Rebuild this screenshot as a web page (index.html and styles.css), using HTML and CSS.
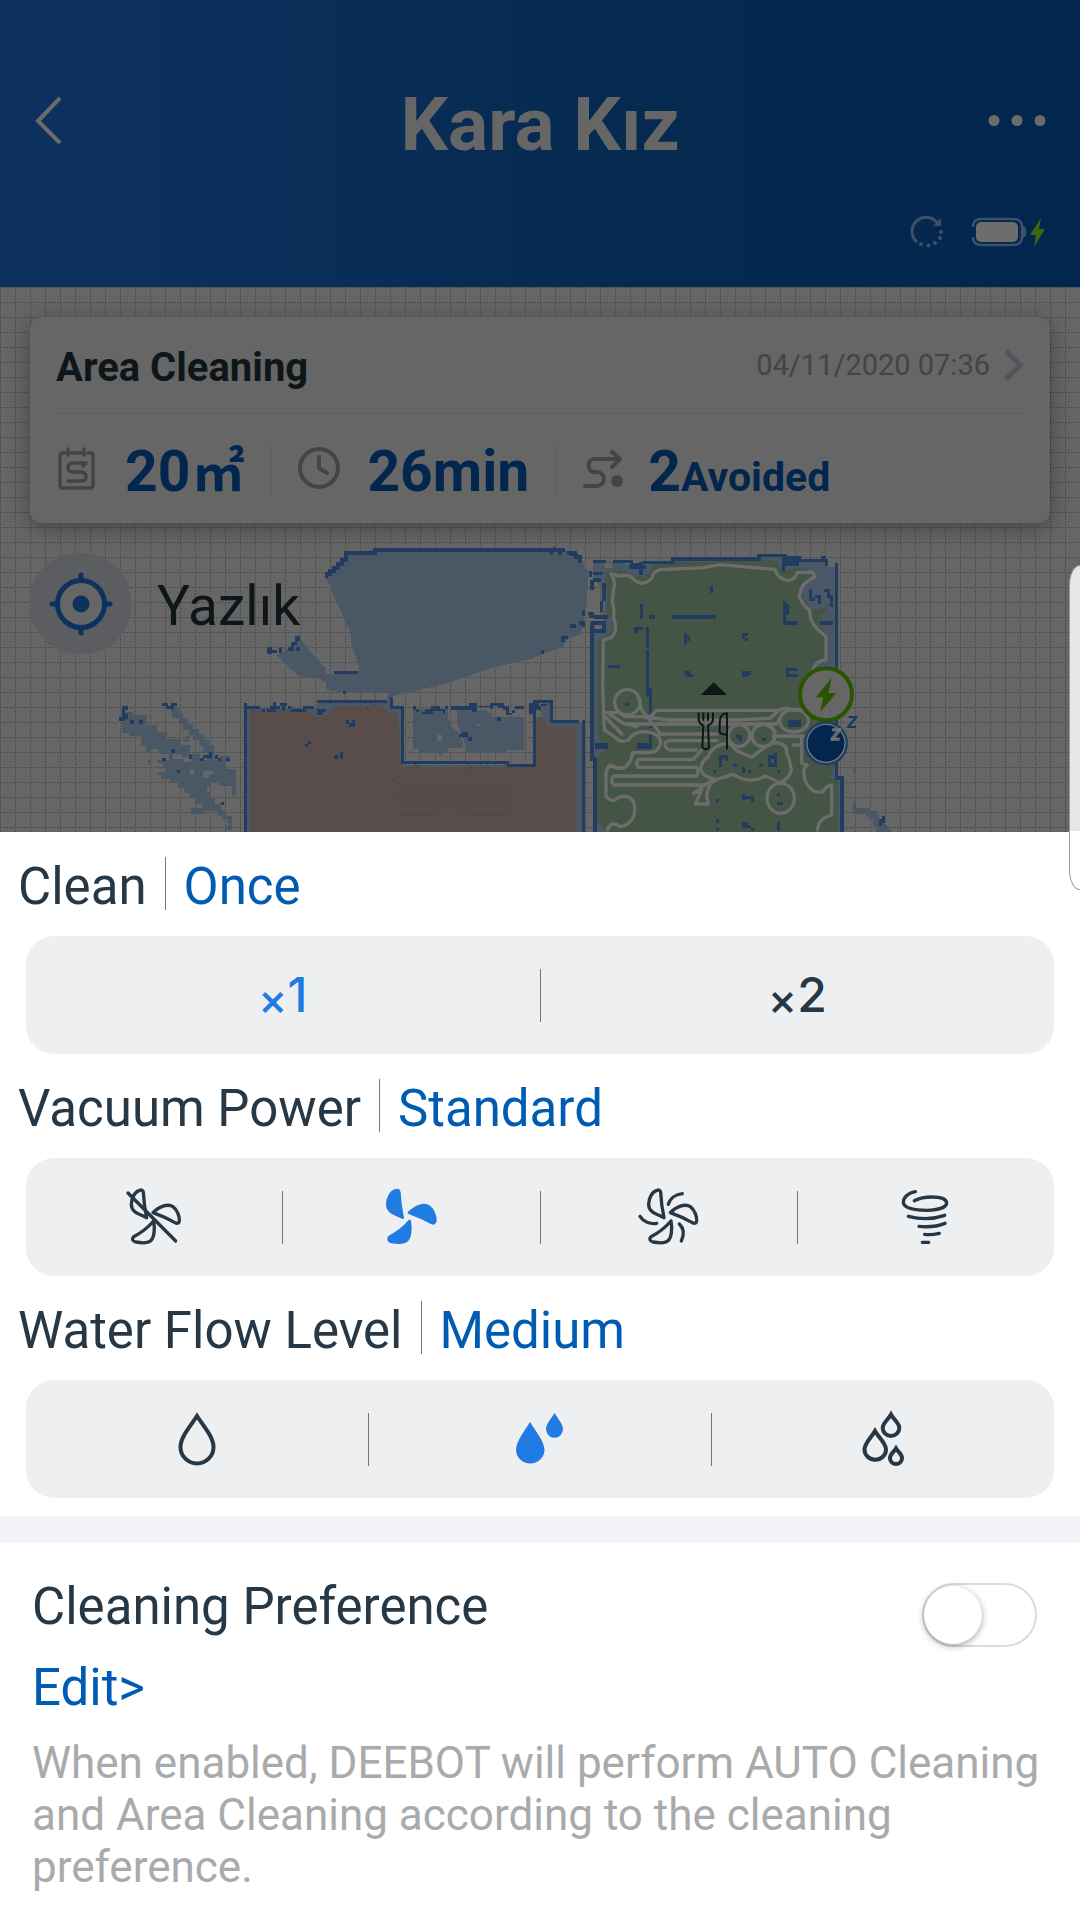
FILE: index.html
```html
<!DOCTYPE html>
<html lang="en">
<head>
<meta charset="utf-8">
<meta name="viewport" content="width=device-width, initial-scale=1">
<title>Kara Kız</title>
<link rel="stylesheet" href="styles.css">
</head>
<body>
<header class="topbar">
  <nav class="nav">
    <button class="icon-button" type="button" aria-label="Back">
      <svg width="28" height="50" viewBox="0 0 28 50" fill="none" stroke="currentColor" stroke-width="4"><path d="M26 3 4 26l22 22"/></svg>
    </button>
    <h1 class="title">Kara Kız</h1>
    <button class="icon-button" type="button" aria-label="More">
      <svg width="58" height="14" viewBox="0 0 58 14" fill="currentColor"><circle cx="6" cy="7.500" r="5.500"/><circle cx="29" cy="7.500" r="5.500"/><circle cx="52" cy="7.500" r="5.500"/></svg>
    </button>
  </nav>
  <div class="status">
    <svg width="34" height="34" viewBox="0 0 34 34" fill="none" stroke="#3c5067" stroke-width="3">
      <path d="M7 27A14 14 0 1 1 28 9"/><path d="M31 3v8h-8z" fill="#3c5067" stroke="none"/>
      <g fill="#3c5067" stroke="none"><circle cx="31" cy="17" r="2"/><circle cx="30" cy="23" r="2"/><circle cx="25" cy="28" r="2"/><circle cx="18.500" cy="30.500" r="2"/><circle cx="11" cy="29" r="2"/></g>
    </svg>
    <svg width="74" height="34" viewBox="0 0 74 34">
      <path d="M1 12Q1 4 9 4h32q9 0 9 8v10q0 8-9 8H9q-8 0-8-8" fill="none" stroke="#3c5067" stroke-width="2.500"/>
      <rect x="4" y="7" width="42" height="20" rx="5" fill="#6d6d6d"/>
      <path d="M51 11q3 1 3 6t-3 6z" fill="#3c5067" stroke="#3c5067"/>
      <path d="M69 3 58 20h6l-2 12 11-18h-6z" fill="#3d680f"/>
    </svg>
  </div>
</header>

<main>
<section class="floor">
  <svg class="floor-map" viewBox="0 287 1080 545" preserveAspectRatio="xMidYMin slice" aria-hidden="true">
    <defs>
      <pattern id="grid" x="0" y="287" width="15" height="15" patternUnits="userSpaceOnUse">
        <path d="M0 .5H15M.5 0V15" stroke="#4e4e4e" stroke-dasharray="2 1" fill="none"/>
      </pattern>
      <pattern id="hatch" x="297" y="770" width="27" height="26" patternUnits="userSpaceOnUse">
        <path d="M3 3 9 3 18 11" stroke="#4b4143" stroke-width="3" fill="none"/>
      </pattern>
    </defs>
    <rect y="287" width="1080" height="545" fill="#666"/>
    <rect y="287" width="1080" height="545" fill="url(#grid)"/>

    <!-- stray readings on the left -->
    <g transform="translate(0 530) scale(.33333)" shape-rendering="crispEdges">
      <path fill="#4a5866" d="M365 545h35v9h40v30h30v22h30v20h40v20h30v25h30v18h60v-10h30v18h-16v20h34v80h-12v-28h-40v-9h-26v9h-10v18h10v16h14v20h20v18h15v18h16v40h-20v-10h10v-22h-20v-9h-12v-16h-40v9h-40v-16h32v-14h-18v-16h-16v-16h-20v-16h-18v-16h-24v-9h-26v-12h-10v-9h26v-12h-10v-16h-18v-10h36v-16h-30v-16h-24v9h-14v-18h-16v-30h-36v-9h-20z"/>
      <path fill="#4a5866" d="M510 535h28v14h10v16h16v16h16v16h16v16h16v16h16v16h14v50h-20v-30h-12v-18h-14v-16h-16v-16h-14v-16h-16v-16h-14v-18h-16zM550 635h18v-18h-10v9h-8zM445 690h9v10h-9z"/>
      <path fill="#666" d="M570 720h12v16h-12zM610 722h30v10h-12v12h-18zM520 672h26v10h26v14h-20v-8h-32z"/>
      <path fill="#213c5e" d="M366 528h18v12h-9v12h9v14h-10v7h-17v-12h9zM390 570h12v11h-12zM417 570h12v11h-12zM487 519h18v8h8v-8h18v10h-8v9h-26v-9h-10zM512 657h13v11h-13zM486 683h12v10h-12zM530 719h10v10h-10zM567 675h10v11h-10zM600 683h10v-7h16v-10h10v18h-24v8h-12zM645 675h9v8h9v9h-9v-6h-9zM678 684h12v8h-12zM663 815h9v10h-9z"/>
    </g>

    <g transform="translate(300 530) scale(.33333)" shape-rendering="crispEdges">
      <!-- upper room -->
      <path fill="#4a5866" d="M78 145 90 165 102 200 122 240 136 280 150 300 155 350 165 375 178 410 174 430 78 432 78 415 40 375 0 325-15 340-40 360-70 375-50 395-30 415 0 440 48 440 78 458 78 478 130 488 262 488 270 500 340 485 440 460 500 440 570 415 700 385 730 370 790 350 800 330 845 310 858 230 865 210 865 125 845 95 830 70 795 60H225L138 68z"/>
      <path fill="none" stroke="#213c5e" stroke-width="10" d="M80 145v-13h10v-9h12v-9h12v-12h12v-12h12V69H225V60H795M800 69h27v12h13v18M750 70h8M764 50v10M775 70h10M102 427h72M129 488h10"/>
      <path fill="#213c5e" d="M-99 351h14v9h15v8h6v-17h9v18h-28v4h-16zM-35 350h9v-14h10v-18h15v16h-8v10h-8v18h-18zM-12 350h12v12h-12zM810 282h18v11h-18zM836 274h18v18h-8v-8h-10zM845 240h10v18h-10zM863 246h18v18h-10v-9h-8zM783 319h20v8h-8v9h-12zM723 361h9v11h-9z"/>
      <!-- red room -->
      <path fill="#4a5866" d="M-158 535H45L55 518H262V495h13v40h30V705H705V560h20v-40h25v60H850V905H-158z"/>
      <path fill="#594d4c" d="M-150 540H20L35 555 60 563 85 550 110 528H245L272 552 290 546 300 620V690L308 710H705L708 575 722 565 750 590H828V905H-150z"/>
      <path fill="url(#hatch)" d="M297 770H642V862H297zM272 796h27v26h-27z"/>
      <path fill="none" stroke="#473e40" stroke-width="3" d="M180 540l12 12M198 530l12 12M214 520l12 8M343 702l14 12M485 712l18 16M505 703l14 12M560 703l12 12M612 703l10 8M275 745l12 10"/>
      <path fill="none" stroke="#213c5e" stroke-width="9" d="M-163 905V519M-160 532h40M-115 541h10M-98 541h12v-9h26M-78 516v30M-60 524h20M-50 524v20M-35 532h8M-28 541H15V532H42M50 514H262M274 500V532H308V698H627V706H703V514H755V576H838M851 570V905"/>
      <path fill="#666" d="M314 540H696V702H628V693H314z"/>
      <path fill="url(#grid)" transform="scale(3) translate(-300 -530)" d="M405 710H532V764H509V761H405z"/>
      <path fill="#4a5866" d="M340 536H445V565L455 590 475 605 480 620 490 640 487 655H445V668H425V677H417V668H357V658H340zM470 541H560V550H575V560H672V660H620V668H503L495 640 480 605 470 580z"/>
      <path fill="#666" d="M411 615h15v18h-15zM530 582h10v6h-10z"/>
      <path fill="#213c5e" d="M338 528h9v9h9v9h-9v-6h-9zM374 536h18v-8h28v9h16v-8h9v8h-9v15h-8v-8h-28v9h-34v-8h8zM454 528h52v-9h24v18h-18v-6h18v14h-14v-6h-62zM535 528h34v-9h44v14h-18v-5h-16v8h-10v-4h-34zM600 528h28v22h16v-9h-8v14h-18v-14h-10v-6h-8zM645 528h27v8h-27zM687 520h12v-9h18v18h24v-8h-18v18h-14v12h-22zM592 562h12v10h-12zM478 612h9v-6h18v16h10v10h-10v-10h-27z"/>
      <path fill="#213c5e" d="M138 570h9v9h9v-9h9v20h-18v-9h-9zM15 642h9v-9h9v9h-9v9h-9zM102 675h11v11h-11zM120 667h9v19h-9zM51 538h26v8h-9v8h-17z"/>
    </g>

    <!-- kitchen -->
    <g transform="translate(570 530) scale(.33333)">
      <g shape-rendering="crispEdges">
        <path fill="#4a5866" d="M66 285H100V250L110 180 70 150V95H130L215 108 310 92 568 80 690 78V92H770V110H800V560L805 745 820 750V905H70V690H62z"/>
        <path fill="#666" d="M50 180h40v60H50zM105 100h20v14h-20zM75 286h20v16H75z"/>
        <path fill="#445545" d="M82 335 100 320 125 305 128 270 112 258 108 125 170 122 180 135 215 140 240 125 255 105 310 97 568 92 620 90 640 125 680 110 735 128 690 170 710 220 730 240 760 235 785 215 760 250 745 285 768 310 775 385 725 400 790 440 795 560 800 700 780 740 805 755V905H108L82 870V690L90 670 112 655 90 630 82 600z"/>
        <path fill="none" stroke="#213c5e" stroke-width="11" d="M66 275V688H75V905M62 280H102V303H70M70 95h38M70 131h28M62 122v18M66 150v30M94 150h-24M102 160v52M95 212v34M64 246v14M72 262h42M130 95h55v10h30M214 95v40M178 112h50M215 98H310V88H568V77H645V92H770V108M641 85v40M641 103h42V95M640 83h52M752 84h10v12M800 98V745H817V905"/>
        <path fill="#213c5e" d="M0 64h16v9h12v9h9v14h-10v-10h-9v-8H0zM0 282h18v11H0zM28 274h18v18h-10v-9h-8zM36 240h9v17h-9zM55 246h18v18H63v-9h-8z"/>
        <path fill="#213c5e" d="M420 168h9v20h-9zM210 222h9v45h-9zM237 255h18v11h-18zM306 255h132v12H306zM192 290h26v10h-14v8h-12zM228 292h9v62h-9zM228 360h9v115h8v120h-9v-95h-8zM236 612h9v46h-44v-18h35zM114 404h36v10h-36zM342 310h10v8h8v16h-8v11h-10zM516 310h18v9h-9v6h9v9h-9v-7h-9zM342 424h18v8h9v9h-18v-7h-9zM516 424h26v10h-9v7h-17zM684 414v9h-27v9h27v9h-36v-27zM639 214h9v8h9v32h-9v20h36v10h-45zM750 273h39v11h-39zM717 178h9v26h9v9h-18zM735 204v-8h18v26h-9v-18zM762 178h18v18h9v34h-9v-26h-10v-17h-8zM76 640h38v18H76zM165 518h12v10h-12zM498 614h18v18h-9v-9h-9zM576 624h12v9h-12zM654 570h39v20h-39zM447 676h26v16h-8v-8h-8v26h-10zM490 702h10v9h-10zM516 710h9v18h-9zM534 720h9v8h-9zM430 720h8v8h-8zM568 702h11v9h-11zM594 676h18v-8h9v42h-27zM621 720h9v9h-9zM438 806h9v9h-9zM516 792h10v5h26v18h-9v-9h-18v4h-9zM621 790h9v8h-9zM621 816h18v9h-18zM438 867h9v12h-9zM438 893h9v9h-9zM516 877h18v8h8v9h9v9h-9v-9h-26zM621 877h9v26h-9z"/>
        <path fill="#445545" d="M603 686h9v14h-9z"/>
        <path fill="#4a5866" d="M849 712h9v16h-9zM849 817h9v18h42v9h18v9h9v27h18v9h9v9h9v7h-44v-18h-9v-18h-14v-9h-9v-9h-38z"/>
        <path fill="#213c5e" d="M936 859h9v20h-9v9h-9v-20h9z"/>
      </g>
      <!-- driven route -->
      <g fill="none" stroke="#6d6c6d" stroke-width="10" stroke-linejoin="round" stroke-linecap="round">
        <path d="M735 140Q730 122 715 127L682 127Q675 150 655 152 620 145 615 118L575 115 450 104 400 113 270 119Q250 125 245 145 220 170 195 152 180 130 150 138L123 132Q140 160 130 180L127 215Q135 240 130 260 145 300 125 322L100 330 98 470 103 600 140 625Q150 640 175 630 190 605 225 605 270 610 272 635 268 670 230 668L188 668Q185 700 160 715 135 715 120 705 105 720 108 745V800Q125 815 135 810 150 795 175 800 200 815 193 850 185 885 150 890 125 870 112 900"/>
        <path d="M735 140Q690 160 688 200 700 230 720 240 715 270 745 300L768 320V390Q740 390 728 420M695 625V700L712 705Q695 715 705 750 725 795 760 785 770 765 785 765V855Q745 865 742 900"/>
        <circle cx="172" cy="517" r="38"/>
        <path d="M105 548H150L165 560H240L260 541H625Q650 530 665 540H700M205 500 215 540 272 612H440M165 582H620L632 562M215 560 300 570H500L600 565 625 542M108 562 155 612M118 552 160 580 200 590M440 632H300Q285 632 285 645 290 660 300 660H380M395 660 370 688H205Q195 700 205 712H380Q388 725 380 738H130Q120 752 130 765H400L440 750"/>
        <ellipse cx="672" cy="572" rx="43" ry="34"/><ellipse cx="507" cy="617" rx="32" ry="33"/><ellipse cx="580" cy="617" rx="34" ry="33"/>
        <path d="M605 590 615 605M610 618H700M670 645H690M480 640Q430 640 415 680 395 690 392 720 405 745 440 748L490 733Q540 765 585 738 610 745 625 760 660 745 664 720 660 690 650 670 655 640 610 638L580 655 545 682 500 662 480 640"/>
        <ellipse cx="632" cy="805" rx="41" ry="45"/>
        <path d="M440 748Q415 760 410 795L414 822H376L395 780 370 790 425 752"/>
      </g>
      <path fill="#0f161a" d="M392 495 431 457 471 495z"/>
      <path fill="none" stroke="#0f161a" stroke-width="6" stroke-linecap="round" d="M386 550V570Q388 582 400 586L397 652Q407 664 417 652L414 586Q426 582 429 570V550M400 550v20M414 550v20M471 550V656M471 550Q449 550 449 580V606Q450 614 471 614"/>
      <circle cx="768" cy="493" r="78" fill="#666" stroke="#2b5400" stroke-width="12"/>
      <path fill="#2b5400" d="M785 444 737 502H760L750 547 799 489H775z"/>
      <circle cx="768" cy="640" r="66" fill="#1d3f66"/>
      <circle cx="768" cy="640" r="57" fill="#02264d" stroke="#777" stroke-width="4"/>
      <text class="sleep" x="784" y="630" font-size="44" fill="#02264d" stroke="#777" stroke-width="4">Z</text>
      <text class="sleep" x="831" y="594" font-size="50" fill="#123763">Z</text>
    </g>
  </svg>

  <article class="card">
    <div class="card-head">
      <h2 class="card-title">Area Cleaning</h2>
      <a class="card-link" href="#log">04/11/2020 07:36
        <svg width="20" height="34" viewBox="0 0 20 34" fill="none" stroke="#50565c" stroke-width="5"><path d="M2 3 16 17 2 31"/></svg>
      </a>
    </div>
    <div class="stats">
      <div class="stat">
        <svg width="42" height="44" viewBox="0 0 42 44" fill="none" stroke="#444" stroke-width="3.500"><path d="M9 6H6Q4 6 4 9V38Q4 41 7 41H34Q37 41 37 38V9Q37 6 34 6H32M15 6H26M12 2v6M28 2v6" stroke-linecap="round"/><path d="M30 16H17q-5 0-5 5 0 4 5 4H25q5 0 5 5 0 4-5 4H12" stroke-linecap="round"/><path d="M30 16l-4 4"/></svg>
        <span class="value">20<span class="area">㎡</span></span>
      </div>
      <div class="stat">
        <svg width="42" height="44" viewBox="0 0 42 44" fill="none" stroke="#444" stroke-width="4"><circle cx="21" cy="21" r="19"/><path d="M21 10V21L29 26" stroke-linecap="round" stroke-linejoin="round"/></svg>
        <span class="value">26min</span>
      </div>
      <div class="stat">
        <svg width="42" height="44" viewBox="0 0 42 44" fill="none" stroke="#444" stroke-width="4"><path d="M2 39H14a7 7 0 0 0 0-14H10A7 7 0 0 1 10 12H36M29 5 37 12 29 20" stroke-linecap="round" stroke-linejoin="round"/><circle cx="34" cy="34" r="6" fill="#444" stroke="none"/></svg>
        <span class="value">2<small class="unit">Avoided</small></span>
      </div>
    </div>
  </article>

  <div class="map-tools">
    <button class="locate" type="button" aria-label="Locate">
      <svg width="64" height="64" viewBox="0 0 64 64"><g fill="#666" stroke="#0d3260" stroke-width="5" stroke-linecap="round"><path d="M32 3v6M32 55v6M3 32h6M55 32h6"/><circle cx="32" cy="32" r="23.500"/></g><circle cx="32" cy="32" r="8.500" fill="#0d3260"/></svg>
    </button>
    <span class="map-name">Yazlık</span>
  </div>
  <div class="edge-handle"></div>
</section>

<section class="sheet">
  <svg width="0" height="0" class="sprite" aria-hidden="true">
    <symbol id="blades" viewBox="0 0 260 260" overflow="visible">
      <path d="M120 91C105 95 95 115 95 133 95 158 120 162 141 173 136 150 132 120 131 97 130 90 125 89 120 91ZM160 158C180 138 205 130 220 140 233 150 240 170 239 183 238 191 231 191 226 188 208 178 185 167 160 158ZM162 183C140 208 118 222 102 230 96 236 98 243 108 246 125 249 145 250 153 242 164 233 166 205 162 183Z"/>
    </symbol>
  </svg>

  <div class="option">
    <h2 class="option-head" id="clean"><span>Clean</span><span class="current">Once</span></h2>
    <div class="segments" role="radiogroup" aria-labelledby="clean">
      <label class="segment"><input type="radio" name="clean" checked><span class="times">×</span><span class="count">1</span></label>
      <label class="segment"><input type="radio" name="clean"><span class="times">×</span><span class="count">2</span></label>
    </div>
  </div>

  <div class="option">
    <h2 class="option-head" id="power"><span>Vacuum Power</span><span class="current">Standard</span></h2>
    <div class="segments" role="radiogroup" aria-labelledby="power">
      <label class="segment"><input type="radio" name="power" aria-label="Quiet">
        <svg class="line" viewBox="67 75 192 192"><use href="#blades" width="260" height="260"/><path d="M85 99 228 243"/></svg></label>
      <label class="segment"><input type="radio" name="power" aria-label="Standard" checked>
        <svg class="solid" viewBox="70 75 192 192"><use href="#blades" width="260" height="260"/></svg></label>
      <label class="segment"><input type="radio" name="power" aria-label="Max">
        <svg class="line" viewBox="60 75 192 192"><use href="#blades" width="260" height="260"/><path d="M154 133C159 115 176 103 196 101M69 169C79 185 99 193 119 190M187 192C201 205 201 225 193 243"/></svg></label>
      <label class="segment"><input type="radio" name="power" aria-label="Max plus">
        <svg class="line" viewBox="882 75 192 192"><path d="M946 95C925 98 910 112 910 128 912 145 945 151 980 151 1015 150 1040 142 1040 128 1038 115 1015 111 995 111 975 111 955 116 943 122M925 169C960 178 1000 178 1034 166M957 199C985 202 1010 200 1035 190M974 223C990 225 1005 223 1018 220M967 247H986"/></svg></label>
    </div>
  </div>

  <div class="option">
    <h2 class="option-head" id="water"><span>Water Flow Level</span><span class="current">Medium</span></h2>
    <div class="segments" role="radiogroup" aria-labelledby="water">
      <label class="segment"><input type="radio" name="water" aria-label="Low">
        <svg class="drop" viewBox="0 1 64 64"><path d="M32 10C25 21 15.500 31 15.500 41A16.500 16.500 0 0 0 48.500 41C48.500 31 39 21 32 10Z"/></svg></label>
      <label class="segment"><input type="radio" name="water" aria-label="Medium" checked>
        <svg class="fill" viewBox="0 0 64 64"><path d="M22 15C16 25 8 34 8 43.500A14.300 14.300 0 0 0 36.500 43.500C36.500 34 28 25 22 15ZM46.500 6C43 12 38 17 38 22A8.300 8.500 0 0 0 55 22C55 17 50 12 46.500 6Z"/></svg></label>
      <label class="segment"><input type="radio" name="water" aria-label="High">
        <svg class="drop" viewBox="0 1 64 64"><path d="M24 25C20 32 13.500 37 13.500 43.500A10.500 10 0 0 0 35 43.500C35 37 28 32 24 25ZM40 8.500C37 14 31.700 17 31.700 22A8.300 8 0 0 0 48.300 22C48.300 17 43 14 40 8.500ZM45 42.500C43 46 39 48 39 52A6 6 0 0 0 51 52C51 48 47 46 45 42.500Z"/></svg></label>
    </div>
  </div>
</section>

<section class="preference">
  <div class="preference-row">
    <div class="preference-text">
      <label class="preference-label" for="pref">Cleaning Preference</label>
      <a class="edit" href="#edit">Edit&gt;</a>
    </div>
    <input class="switch" id="pref" type="checkbox" role="switch">
  </div>
  <p class="hint">When enabled, DEEBOT will perform AUTO Cleaning and Area Cleaning according to the cleaning preference.</p>
</section>
</main>
</body>
</html>
```
FILE: styles.css
```css
* { box-sizing: border-box; }

body {
  margin: 0;
  background: #fff;
  color: #263746;
  font-family: Roboto, "Noto Sans CJK SC", sans-serif;
}

h1, h2, p { margin: 0; }
svg { display: block; flex: none; }
a { color: inherit; text-decoration: none; }

button {
  border: 0;
  padding: 0;
  background: none;
  color: inherit;
  font: inherit;
}

/* Header */
.topbar {
  padding: 70px 34px 38px;
  background: linear-gradient(90deg, #0e3260, #05294f 60%, #02264d);
  color: #6b6b6b;
}

.nav {
  display: grid;
  grid-template-columns: 60px 1fr 60px;
  align-items: center;
  height: 100px;
}

.icon-button:last-child { justify-self: end; }

.title {
  padding-top: 8px;
  font-size: 75px;
  line-height: 92px;
  text-align: center;
  color: #666;
}

.status {
  display: flex;
  justify-content: flex-end;
  gap: 28px;
  margin-top: 45px;
}

/* Map area */
.floor {
  position: relative;
  min-height: 545px;
  padding: 30px;
}

.floor-map {
  position: absolute;
  inset: 0;
  width: 100%;
  height: 100%;
}

.sleep { font-weight: 700; font-style: italic; }

.card {
  position: relative;
  padding: 0 26px;
  border-radius: 12px;
  background: #666;
  box-shadow: 0 4px 22px rgba(0, 0, 0, .35);
}

.card-head {
  display: flex;
  justify-content: space-between;
  align-items: center;
  height: 97px;
  border-bottom: 1px solid #5e5e5e;
}

.card-title {
  padding-top: 6px;
  font-size: 40px;
  line-height: 48px;
  color: #0f161a;
}

.card-link {
  display: flex;
  align-items: center;
  gap: 14px;
  font-size: 29px;
  line-height: 36px;
  color: #444;
}

.stats {
  display: flex;
  align-items: center;
  height: 109px;
}

.stat {
  display: flex;
  align-items: center;
  gap: 27px;
  height: 50px;
  padding-right: 27px;
}

.stat + .stat {
  padding-left: 26px;
  border-left: 1px solid #5e5e5e;
}

.stat:last-child { gap: 23px; }

.value {
  display: flex;
  align-items: baseline;
  padding-top: 6px;
  font-size: 57px;
  font-weight: 700;
  line-height: 68px;
  color: #02264d;
}

.area {
  margin-left: 2px;
  font-size: 52px;
  line-height: 52px;
}

.unit {
  font-size: 41px;
  line-height: 48px;
}

.map-tools {
  position: relative;
  display: flex;
  align-items: center;
  gap: 26px;
  margin-top: 30px;
}

.locate {
  display: grid;
  place-items: center;
  width: 101px;
  height: 101px;
  border-radius: 48px;
  background: #5b5d61;
}

.map-name {
  padding-top: 4px;
  font-size: 55px;
  line-height: 66px;
  color: #0f161a;
}

.edge-handle {
  position: absolute;
  z-index: 2;
  top: 278px;
  right: 0;
  width: 11px;
  height: 325px;
  border: 1px solid #999;
  border-right: 0;
  border-radius: 11px 0 0 11px / 20px 0 0 20px;
  background: linear-gradient(#e6e6e6 82%, #fff 82%);
}

/* Cleaning options */
.sheet {
  display: flex;
  flex-direction: column;
  gap: 25px;
  padding: 25px 26px 18px;
  border-bottom: 27px solid #f3f4f9;
}

.sprite { position: absolute; }

.option-head {
  display: flex;
  align-items: center;
  height: 53px;
  margin: 0 -8px 26px;
  font-size: 51px;
  font-weight: 400;
  line-height: 59px;
}

.option-head span { padding-top: 6px; }

.option-head .current {
  position: relative;
  margin-left: 18px;
  padding-left: 19px;
  color: #005bb2;
}

.option-head .current::before {
  content: "";
  position: absolute;
  top: 6px;
  left: 0;
  width: 1px;
  height: 53px;
  background: #777;
}

.segments {
  display: flex;
  align-items: center;
  height: 118px;
  border-radius: 28px;
  background: #edeff1;
}

.segment {
  display: flex;
  flex: 1;
  justify-content: center;
  align-items: center;
  height: 53px;
  font-family: Inter, sans-serif;
  font-size: 48px;
  font-weight: 500;
}

.segment + .segment { border-left: 1px solid #777; }
.segment:has(:checked) { color: #207be2; }

.segment input {
  position: absolute;
  opacity: 0;
}

.times {
  padding-top: 8px;
  font-size: 44px;
}

.count { padding-bottom: 2px; }

.segment svg {
  width: 64px;
  height: 64px;
  fill: none;
  stroke: currentColor;
  stroke-linecap: round;
  stroke-linejoin: round;
}

.segment .line { stroke-width: 10px; }
.segment .solid { fill: currentColor; stroke-width: 8px; }
.segment .drop { stroke-width: 4px; stroke-linejoin: miter; }
.segment .fill { fill: currentColor; stroke: none; }

/* Preference */
.preference { padding: 34px 32px 24px; }

.preference-row {
  display: flex;
  justify-content: space-between;
}

.preference-text {
  display: flex;
  flex-direction: column;
  align-items: flex-start;
  gap: 22px;
  font-size: 51px;
  line-height: 59px;
}

.edit { color: #005bb2; }

.switch {
  width: 115px;
  height: 64px;
  margin: 6px 11px 0 0;
  border: 2px solid #dcdcdc;
  border-radius: 32px;
  background: #fff;
  appearance: none;
}

.switch::before {
  content: "";
  display: block;
  width: 58px;
  height: 58px;
  margin: 1px 0 0;
  border-radius: 50%;
  background: #fff;
  box-shadow: 0 2px 7px rgba(0, 0, 0, .35);
}

.hint {
  margin-top: 20px;
  font-size: 44px;
  line-height: 52px;
  color: #a9aaac;
}
```
